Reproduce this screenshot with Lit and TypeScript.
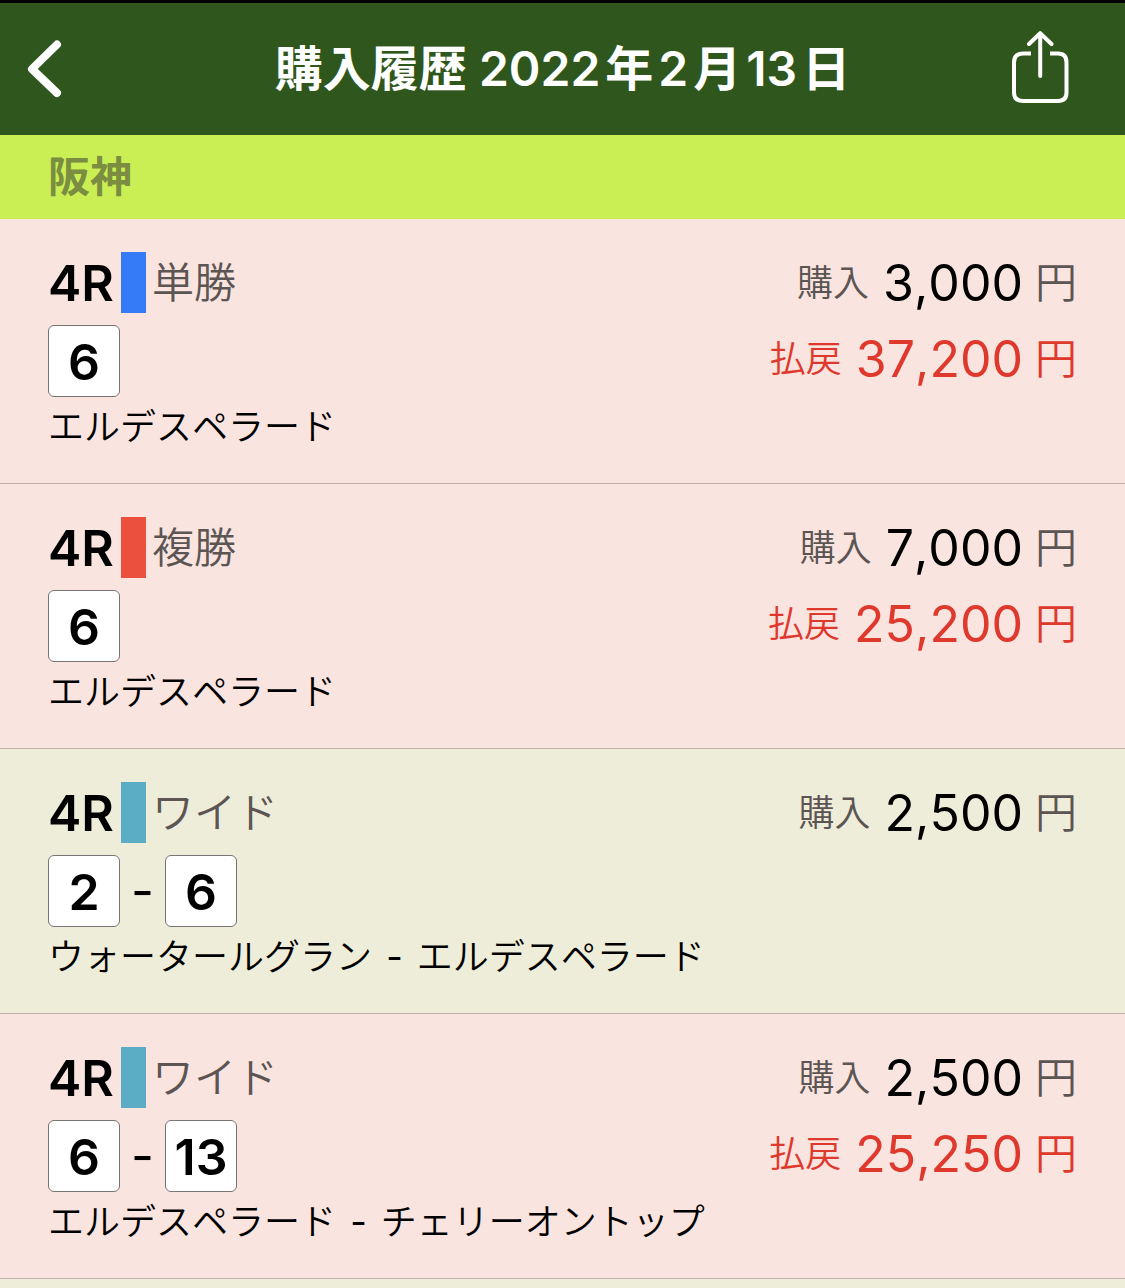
import { LitElement, html, css, nothing } from "lit";
import { customElement, property } from "lit/decorators.js";
import { styleMap } from "lit/directives/style-map.js";

interface Bet {
  race: string;
  kind: string;
  color: string;
  numbers: number[];
  horses: string[];
  paid: string;
  payout?: string;
}

const BETS: Bet[] = [
  { race: "4R", kind: "単勝", color: "#357af6", numbers: [6], horses: ["エルデスペラード"], paid: "3,000", payout: "37,200" },
  { race: "4R", kind: "複勝", color: "#eb4f3d", numbers: [6], horses: ["エルデスペラード"], paid: "7,000", payout: "25,200" },
  { race: "4R", kind: "ワイド", color: "#5aadc5", numbers: [2, 6], horses: ["ウォータールグラン", "エルデスペラード"], paid: "2,500" },
  { race: "4R", kind: "ワイド", color: "#5aadc5", numbers: [6, 13], horses: ["エルデスペラード", "チェリーオントップ"], paid: "2,500", payout: "25,250" },
];

@customElement("bet-row")
export class BetRow extends LitElement {
  @property({ attribute: false }) bet!: Bet;

  static styles = css`
    :host {
      display: block;
      font-kerning: none;
    }
    .row {
      display: flex;
      justify-content: space-between;
      padding: 33px 48px 26px;
      background: #eeedd9;
      border-bottom: 1px solid #bfb0aa;
    }
    .row.hit {
      background: #fae4df;
    }
    .head {
      display: flex;
      align-items: center;
      height: 61px;
      line-height: 64px;
    }
    .race {
      font-size: 50px;
      font-weight: 600;
    }
    .mark {
      width: 25px;
      height: 61px;
      margin: 0 6px 0 7px;
    }
    .kind {
      font-size: 42px;
      font-weight: 350;
      color: #5c5553;
    }
    .numbers {
      display: flex;
      align-items: center;
      margin-top: 12px;
      font-size: 50px;
    }
    .number {
      box-sizing: border-box;
      display: flex;
      align-items: center;
      justify-content: center;
      width: 72px;
      height: 72px;
      padding-top: 2px;
      border: 1px solid #787473;
      border-radius: 6px;
      background: #fff;
      font-weight: 600;
    }
    .dash {
      width: 45px;
      text-align: center;
      line-height: 60px;
    }
    .horses {
      margin: 0;
      font-size: 36px;
      font-weight: 350;
      line-height: 60px;
      white-space: nowrap;
    }
    .link {
      margin: 0 4px;
      font-weight: 400;
    }
    .money {
      display: flex;
      flex-direction: column;
      gap: 15px;
      margin: 0;
    }
    .sum {
      display: flex;
      align-items: center;
      justify-content: flex-end;
      gap: 14px;
      height: 61px;
      padding-top: 1px;
      box-sizing: border-box;
      line-height: 62px;
      font-weight: 350;
      color: #5c5553;
    }
    .sum.payout,
    .sum.payout .value {
      color: #df382c;
    }
    .label {
      font-size: 36px;
    }
    .amount {
      display: flex;
      align-items: center;
      gap: 12px;
      margin: 0;
      font-size: 42px;
    }
    .value {
      font-size: 50px;
      font-weight: 400;
      color: #000;
    }
  `;

  private sum(label: string, value: string, payout: boolean) {
    return html`
      <div class="sum ${payout ? "payout" : ""}">
        <dt class="label">${label}</dt>
        <dd class="amount"><span class="value">${value}</span><span>円</span></dd>
      </div>
    `;
  }

  render() {
    const b = this.bet;
    return html`
      <article class="row ${b.payout ? "hit" : ""}">
        <div>
          <div class="head">
            <span class="race">${b.race}</span>
            <span class="mark" style=${styleMap({ background: b.color })}></span>
            <span class="kind">${b.kind}</span>
          </div>
          <div class="numbers">
            ${b.numbers.map(
              (n, i) => html`${i ? html`<span class="dash">-</span>` : nothing}<span class="number">${n}</span>`
            )}
          </div>
          <p class="horses">${b.horses.map((name, i) => html`${i ? html` <span class="link">-</span> ` : nothing}${name}`)}</p>
        </div>
        <dl class="money">
          ${this.sum("購入", b.paid, false)}
          ${b.payout ? this.sum("払戻", b.payout, true) : nothing}
        </dl>
      </article>
    `;
  }
}

@customElement("app-root")
export class AppRoot extends LitElement {
  static styles = css`
    :host {
      display: block;
      min-height: 100vh;
      background: #eeedd9;
      color: #000;
      font-family: Inter, "Noto Sans CJK JP", sans-serif;
    }
    .bar {
      display: grid;
      grid-template-columns: 1fr auto 1fr;
      align-items: center;
      height: 132px;
      padding: 0 24px;
      border-top: 3px solid #000;
      background: #2f561c;
      color: #fff;
    }
    .title {
      margin: 0;
      font-size: 48px;
      line-height: 60px;
      font-weight: 600;
      white-space: nowrap;
    }
    .unit {
      margin: 0 5px;
    }
    .unit:last-child {
      margin-right: 0;
    }
    .action {
      display: flex;
      padding: 0;
      border: 0;
      background: none;
      color: inherit;
    }
    .share {
      justify-self: end;
      padding-right: 28px;
    }
    .venue {
      margin: 0;
      padding: 0 48px;
      background: #c9ef55;
      color: #7a8d40;
      font-size: 42px;
      line-height: 84px;
      font-weight: 600;
    }
  `;

  render() {
    return html`
      <header class="bar">
        <button class="action" aria-label="戻る">
          <svg width="42" height="64" viewBox="0 0 42 64" fill="none" stroke="currentColor" stroke-width="8" stroke-linecap="round" stroke-linejoin="round">
            <path d="M33 7.500 8 32 33 56" />
          </svg>
        </button>
        <h1 class="title">購入履歴 2022<span class="unit">年</span>2<span class="unit">月</span>13<span class="unit">日</span></h1>
        <button class="action share" aria-label="共有">
          <svg width="64" height="76" viewBox="0 0 64 76" fill="none" stroke="currentColor" stroke-width="4">
            <path d="M22 22.500H14Q5 22.500 5 31.500V61.500Q5 70 14 70H49Q57.500 70 57.500 61.500V31.500Q57.500 22.500 49 22.500H41" />
            <path d="M31.200 45V2.500M20 13 31.200 2.200 42.500 13" stroke-linecap="round" stroke-linejoin="round" />
          </svg>
        </button>
      </header>
      <main>
        <h2 class="venue">阪神</h2>
        ${BETS.map((bet) => html`<bet-row .bet=${bet}></bet-row>`)}
      </main>
    `;
  }
}
